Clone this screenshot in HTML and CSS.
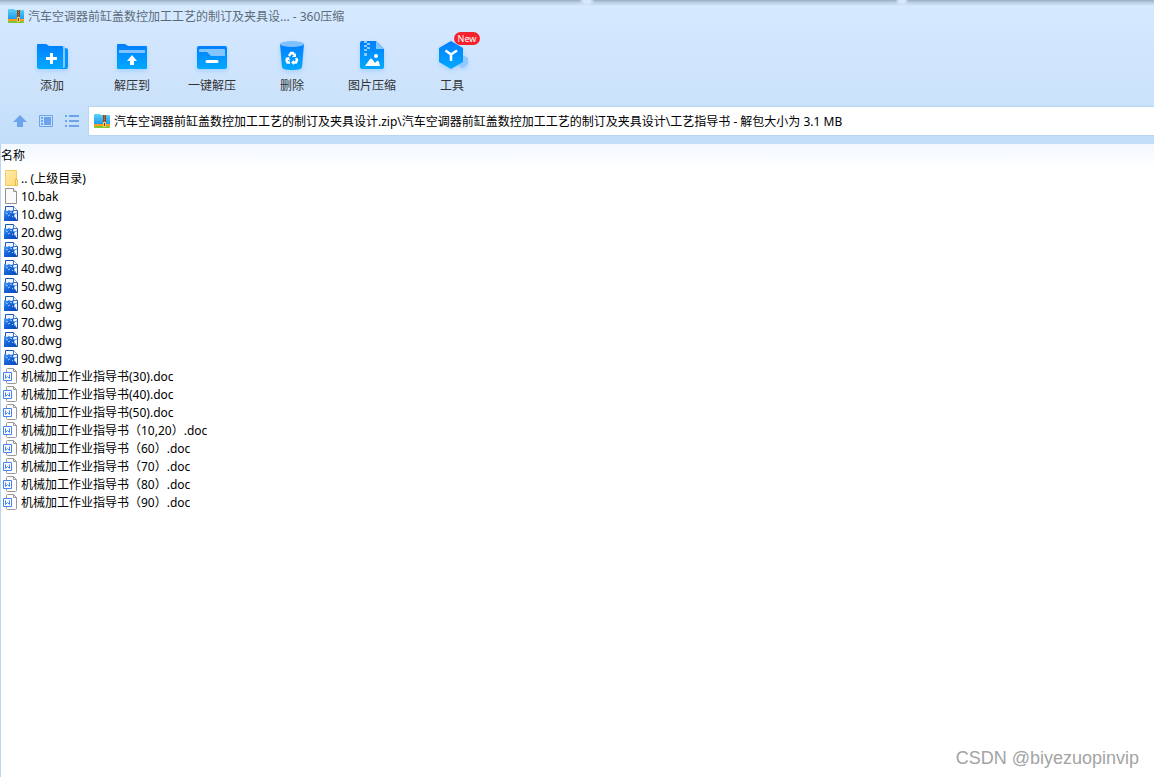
FILE: index.html
```html
<!DOCTYPE html>
<html lang="zh-CN">
<head>
<meta charset="utf-8">
<title>360压缩</title>
<link rel="stylesheet" href="styles.css">
</head>
<body>
<svg class="defs" aria-hidden="true">
  <defs>
    <linearGradient id="blue" x1="0" y1="0" x2="0" y2="1"><stop offset="0" stop-color="#007eff"/><stop offset="1" stop-color="#00a9ff"/></linearGradient>
    <linearGradient id="sky" x1="0" y1="0" x2="0" y2="1"><stop offset="0" stop-color="#5fd0fa"/><stop offset="1" stop-color="#1597ee"/></linearGradient>
    <linearGradient id="yellow" x1="0" y1="0" x2="1" y2="1"><stop offset="0" stop-color="#ffebaa"/><stop offset="1" stop-color="#ffda75"/></linearGradient>
    <linearGradient id="ink" x1="0" y1="0" x2="1" y2="1"><stop offset="0" stop-color="#5aa2f4"/><stop offset=".4" stop-color="#1567dc"/><stop offset="1" stop-color="#0a44b4"/></linearGradient>
    <symbol id="zip" viewBox="0 0 16 16">
      <path d="M0 2q0-1 1-1h5l1 1h8q1 0 1 1v9H0z" fill="url(#sky)"/>
      <path d="M0 11h16v2H0z" fill="#ff9c1f"/><path d="M0 13h16v1q0 1-1 1H1q-1 0-1-1z" fill="#7bc832"/>
      <path d="M9 2h3v8H9z" fill="#8a4a20"/><path d="M10.500 2v7" stroke="#c98a48" stroke-dasharray="1 1"/>
      <path d="M9 9h3v5H9z" fill="#f9c85b"/><path d="M10 10h1v3h-1z" fill="#7a3d1c"/>
    </symbol>
    <symbol id="folder" viewBox="0 0 16 18">
      <path d="M2.500 1.500h11v15h-11z" fill="url(#yellow)" stroke="#f2cc60"/><path d="M12.500 10.500h2v6h-2z" fill="#ffe8a0" stroke="#e8bc43"/>
    </symbol>
    <symbol id="file" viewBox="0 0 16 18">
      <path d="M2.500 1.500h8l3 3v12h-11z" fill="#fafafa" stroke="#909090"/><path d="M10.500 1.500v3h3" fill="#fff" stroke="#909090"/>
    </symbol>
    <symbol id="dwg" viewBox="0 0 16 18">
      <path d="M2.500 1.500h8l4 4v10h-12z" fill="#eef6ff" stroke="#2054ae"/><path d="M10.500 1.500v4h4" fill="#fff" stroke="#3b70c5"/>
      <path d="M1 5l3 1 2-1 2 1 3-1-1 3 2 1-1 2 3 4v1H1z" fill="url(#ink)"/>
      <path d="M3 8l2 1M7 7l2 1M5 11l2-1M9 11l1 1" stroke="#9cc8fc"/>
      <path d="M11 9l3-1M11 12l2 1" stroke="#5e9bea"/>
    </symbol>
    <symbol id="doc" viewBox="0 0 16 18">
      <path d="M3.500 5V2.500q0-1 1-1h6l3 3v11q0 1-1 1h-8q-1 0-1-1V14" fill="#fff" stroke="#989898"/><path d="M10.500 1.500v3h3" fill="none" stroke="#989898"/>
      <path d="M.500 5.500h8v8h-8z" fill="#fff" stroke="#4584f2"/><path d="M2.500 7.500v4l2-2 2 2v-4" fill="none" stroke="#4584f2"/>
    </symbol>
  </defs>
</svg>
<div class="window">
  <header class="chrome">
    <div class="titlebar"><svg class="app-icon"><use href="#zip"/></svg><h1 class="title">汽车空调器前缸盖数控加工工艺的制订及夹具设... - 360压缩</h1></div>
    <nav class="toolbar" aria-label="工具栏">
      <button class="tool"><svg class="tool-icon" viewBox="0 0 32 32"><path d="M1 5q0-1 1-1h8l3 2h13q1 0 1 1v22H3q-2 0-2-2z" fill="url(#blue)"/><path d="M27 6q2 0 2 2v19q0 1-2 1z" fill="#8bc6ff"/><path d="M29 8q3 0 3 2v17q0 2-2 2h-5v-1h3q1 0 1-2z" fill="#0094ff"/><path d="M15.500 13v11M10 18.500h11" stroke="#fff" stroke-width="3"/></svg><span>添加</span></button>
      <button class="tool"><svg class="tool-icon" viewBox="0 0 32 32"><path d="M1 5q0-1 1-1h7l3 2h18q1 0 1 1v21q0 1-1 1H2q-1 0-1-1z" fill="url(#blue)"/><path d="M3 10h26v3H3z" fill="#7fc2ff"/><path d="M16 15l5 6h-3v4h-4v-4h-3z" fill="#fff"/></svg><span>解压到</span></button>
      <button class="tool"><svg class="tool-icon" viewBox="0 0 32 32"><rect x="1" y="6" width="30" height="23" rx="2" fill="url(#blue)"/><path d="M4 9h24q1 0 1 1v6H15l-4-4H3v-2q0-1 1-1z" fill="#82c5ff"/><path d="M11 21.500h10" stroke="#fff" stroke-width="3" stroke-linecap="round"/></svg><span>一键解压</span></button>
      <button class="tool"><svg class="tool-icon" viewBox="0 0 32 32"><path d="M4 4h24l-2 23q0 3-10 3T6 27z" fill="url(#blue)"/><ellipse cx="16" cy="4" rx="12" ry="3" fill="#7fc2ff"/><g fill="none" stroke="#fff" stroke-width="2.500"><path d="M13 16l2-3h2l1 2"/><path d="M20 18l1 2-1 2.500h-3"/><path d="M14 22.500h-2.500l-1-2 1-2"/></g><path d="M20 13v4h-4zM18 20v5l-3-2.500zM9 18l4-1 1 4z" fill="#fff"/></svg><span>删除</span></button>
      <button class="tool"><svg class="tool-icon" viewBox="0 0 32 32"><path d="M6 1h14l8 8v18q0 2-2 2H6q-2 0-2-2V3q0-2 2-2z" fill="url(#blue)"/><path d="M20 1l8 8h-8z" fill="#82c5ff"/><path d="M8 1h3v2H8zM11 3h3v2h-3zM8 5h3v2H8zM11 7h3v2h-3zM8 9h3v2H8zM8 13h3v3H8z" fill="#8fcbff"/><circle cx="20" cy="16" r="2" fill="#fff"/><path d="M9 26l5-7q1-1 2 0l3 4 2-2q1-1 2 1l1 4z" fill="#fff"/></svg><span>图片压缩</span></button>
      <button class="tool"><svg class="tool-icon" viewBox="0 0 32 32"><path d="M24 16h5l3 2v6l-5 4-4-2z" fill="#8fc9ff"/><path d="M15 1l12 7v14l-12 7-12-7V8z" fill="url(#blue)"/><path d="M9.500 10.500l5.500 4 6-4M15 14v7" fill="none" stroke="#fff" stroke-width="2.500"/></svg><span>工具</span><span class="badge">New</span></button>
    </nav>
    <div class="location">
      <div class="nav-buttons">
        <button class="nav-button" aria-label="向上"><svg viewBox="0 0 16 16"><path d="M8 2l7 7h-4v5H5V9H1z" fill="#6da3ed"/></svg></button>
        <button class="nav-button" aria-label="预览"><svg viewBox="0 0 16 16"><path d="M1.500 2.500h13v11h-13z" fill="none" stroke="#6da3ed"/><path d="M6 4h7v8H6zM3 4h2v2H3zM3 7h2v2H3zM3 10h2v2H3z" fill="#6da3ed"/></svg></button>
        <button class="nav-button" aria-label="列表"><svg viewBox="0 0 16 16"><path d="M1 2h2v2H1zM1 7h2v2H1zM1 12h2v2H1zM5 2h10v2H5zM5 7h10v2H5zM5 12h10v2H5z" fill="#6da3ed"/></svg></button>
      </div>
      <label class="address"><svg class="app-icon"><use href="#zip"/></svg><input class="path" aria-label="路径" value="汽车空调器前缸盖数控加工工艺的制订及夹具设计.zip\汽车空调器前缸盖数控加工工艺的制订及夹具设计\工艺指导书 - 解包大小为 3.1 MB"></label>
    </div>
  </header>
  <main class="content">
    <table class="files">
      <thead><tr><th scope="col">名称</th></tr></thead>
      <tbody>
        <tr><td><div class="entry"><svg class="file-icon"><use href="#folder"/></svg><span>.. (上级目录)</span></div></td></tr>
        <tr><td><div class="entry"><svg class="file-icon"><use href="#file"/></svg><span>10.bak</span></div></td></tr>
        <tr><td><div class="entry"><svg class="file-icon"><use href="#dwg"/></svg><span>10.dwg</span></div></td></tr>
        <tr><td><div class="entry"><svg class="file-icon"><use href="#dwg"/></svg><span>20.dwg</span></div></td></tr>
        <tr><td><div class="entry"><svg class="file-icon"><use href="#dwg"/></svg><span>30.dwg</span></div></td></tr>
        <tr><td><div class="entry"><svg class="file-icon"><use href="#dwg"/></svg><span>40.dwg</span></div></td></tr>
        <tr><td><div class="entry"><svg class="file-icon"><use href="#dwg"/></svg><span>50.dwg</span></div></td></tr>
        <tr><td><div class="entry"><svg class="file-icon"><use href="#dwg"/></svg><span>60.dwg</span></div></td></tr>
        <tr><td><div class="entry"><svg class="file-icon"><use href="#dwg"/></svg><span>70.dwg</span></div></td></tr>
        <tr><td><div class="entry"><svg class="file-icon"><use href="#dwg"/></svg><span>80.dwg</span></div></td></tr>
        <tr><td><div class="entry"><svg class="file-icon"><use href="#dwg"/></svg><span>90.dwg</span></div></td></tr>
        <tr><td><div class="entry"><svg class="file-icon"><use href="#doc"/></svg><span>机械加工作业指导书(30).doc</span></div></td></tr>
        <tr><td><div class="entry"><svg class="file-icon"><use href="#doc"/></svg><span>机械加工作业指导书(40).doc</span></div></td></tr>
        <tr><td><div class="entry"><svg class="file-icon"><use href="#doc"/></svg><span>机械加工作业指导书(50).doc</span></div></td></tr>
        <tr><td><div class="entry"><svg class="file-icon"><use href="#doc"/></svg><span>机械加工作业指导书（10,20）.doc</span></div></td></tr>
        <tr><td><div class="entry"><svg class="file-icon"><use href="#doc"/></svg><span>机械加工作业指导书（60）.doc</span></div></td></tr>
        <tr><td><div class="entry"><svg class="file-icon"><use href="#doc"/></svg><span>机械加工作业指导书（70）.doc</span></div></td></tr>
        <tr><td><div class="entry"><svg class="file-icon"><use href="#doc"/></svg><span>机械加工作业指导书（80）.doc</span></div></td></tr>
        <tr><td><div class="entry"><svg class="file-icon"><use href="#doc"/></svg><span>机械加工作业指导书（90）.doc</span></div></td></tr>
      </tbody>
    </table>
  </main>
  <div class="watermark">CSDN @biyezuopinvip</div>
</div>
</body>
</html>
```
FILE: styles.css
```css
* { box-sizing: border-box; }
body { margin: 0; font: 12px/18px "Noto Sans", "Noto Sans CJK SC", sans-serif; color: #000; }
button, input { font: inherit; color: inherit; border: 0; padding: 0; margin: 0; background: none; }
.defs { position: absolute; width: 0; height: 0; }
.window { position: relative; min-height: 100vh; display: flex; flex-direction: column; background: #fff; }
.chrome {
  background:
    radial-gradient(8px 5px at 587px 1px, #d8e8ff 40%, transparent),
    radial-gradient(7px 5px at 902px 1px, #d8e8ff 40%, transparent),
    linear-gradient(#95abc0 0, #b5cadd 2px, #d5eaff 6px, #d3e7ff 30px, #cbe2fb 100px, #c2def9 140px);
  padding-bottom: 8px;
}
.titlebar { display: flex; align-items: center; gap: 4px; height: 32px; padding-left: 8px; }
.app-icon { width: 16px; height: 16px; flex: none; }
.title { margin: 0; padding-top: 2px; font-size: 12px; font-weight: 400; color: #5d6b79; }
.toolbar { display: flex; height: 75px; padding: 8px 0 0 12px; }
.tool { position: relative; width: 80px; display: flex; flex-direction: column; align-items: center; gap: 5px; color: #333; }
.tool-icon { width: 32px; height: 32px; overflow: visible; filter: drop-shadow(0 2px 2px #007fff30); }
.badge { position: absolute; left: 42px; top: -8px; width: 26px; height: 13px; border-radius: 7px; background: #f5222d; color: #fff; font-size: 9px; line-height: 13px; text-align: center; }
.location { display: flex; height: 28px; }
.nav-buttons { display: flex; align-items: center; gap: 10px; width: 89px; padding-left: 12px; flex: none; }
.nav-button { width: 16px; height: 16px; }
.nav-button svg { display: block; }
.address { flex: 1; display: flex; align-items: center; gap: 4px; padding-left: 5px; background: #fff; box-shadow: 0 0 0 1px #b8d5f3; }
.path { flex: 1; min-width: 0; height: 28px; outline: 0; }
.content { flex: 1; border-left: 1px solid #b9d6f5; border-top: 1px solid #c2def9; background: linear-gradient(#f2f8ff, #fff 24px); }
.files { width: 100%; border-collapse: collapse; }
.files th { height: 25px; padding: 0 0 2px; font-weight: 400; text-align: left; }
.files td { padding: 0; }
.entry { display: flex; gap: 2px; padding-left: 2px; height: 18px; white-space: nowrap; }
.entry span { padding-top: 1px; }
.file-icon { width: 16px; height: 18px; flex: none; }
.watermark { position: absolute; right: 15px; bottom: 8px; font: 18px/22px "Liberation Sans", sans-serif; color: #a3a3a3; }
```
